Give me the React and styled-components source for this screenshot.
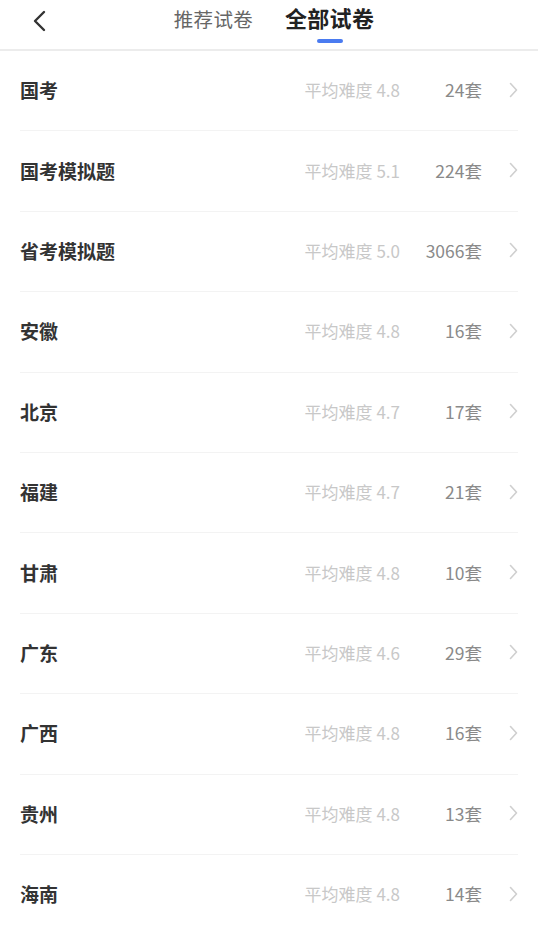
import styled, { createGlobalStyle } from 'styled-components';

const GlobalStyle = createGlobalStyle`
    html, body {
        margin: 0;
        padding: 0;
        background: #fff;
    }

    body {
        font-family: "Noto Sans CJK SC", "Noto Sans", sans-serif;
        -webkit-font-smoothing: antialiased;
    }
`;

const Page = styled.div`
    width: 538px;
    height: 934px;
    overflow: hidden;
`;

const Header = styled.header`
    position: relative;
    height: 49px;
    display: flex;
    align-items: center;
    justify-content: center;
    border-bottom: 2px solid #ececec;
`;

const BackBtn = styled.button`
    position: absolute;
    left: 26px;
    top: 8px;
    width: 26px;
    height: 26px;
    padding: 0;
    border: none;
    background: none;
    display: flex;
    align-items: center;
    justify-content: center;
`;

const Tabs = styled.nav`
    display: flex;
    align-items: flex-start;
    gap: 32px;
    margin-left: 10px;
    height: 100%;
`;

const Tab = styled.div`
    position: relative;
    padding-top: ${({ $active }) => ($active ? '2px' : '4px')};
    font-size: ${({ $active }) => ($active ? '22px' : '19.5px')};
    font-weight: ${({ $active }) => ($active ? 700 : 400)};
    color: ${({ $active }) => ($active ? '#222' : '#666')};
    line-height: 30px;
    letter-spacing: 0.3px;

    &::after {
        content: '';
        display: ${({ $active }) => ($active ? 'block' : 'none')};
        position: absolute;
        left: 50%;
        top: 39px;
        width: 26px;
        height: 4px;
        margin-left: -13px;
        border-radius: 2px;
        background: #4a7bf0;
    }
`;

const List = styled.ul`
    list-style: none;
    margin: 0;
    padding: 0;
`;

const Row = styled.li`
    height: 80.4px;
    box-sizing: border-box;
    margin: 0 20px;
    display: flex;
    align-items: center;
    border-bottom: 1px solid #f3f3f3;
    padding-bottom: 2px;
`;

const Name = styled.span`
    flex: 1;
    font-size: 19px;
    font-weight: 700;
    color: #333;
`;

const Difficulty = styled.span`
    font-size: 17px;
    color: #c8c8c8;
`;

const Count = styled.span`
    width: 82px;
    text-align: right;
    font-size: 17.5px;
    color: #8a8a8a;
`;

const Arrow = styled.span`
    width: 36px;
    display: flex;
    justify-content: flex-end;
`;

const rows = [
    ['国考', '4.8', 24],
    ['国考模拟题', '5.1', 224],
    ['省考模拟题', '5.0', 3066],
    ['安徽', '4.8', 16],
    ['北京', '4.7', 17],
    ['福建', '4.7', 21],
    ['甘肃', '4.8', 10],
    ['广东', '4.6', 29],
    ['广西', '4.8', 16],
    ['贵州', '4.8', 13],
    ['海南', '4.8', 14],
];

function App() {
    return (
        <Page>
            <GlobalStyle />
            <Header>
                <BackBtn aria-label="返回">
                    <svg width="16" height="22" viewBox="0 0 16 22" fill="none">
                        <path d="M13 2 L4 11 L13 20" stroke="#333" strokeWidth="2.4" strokeLinecap="round" strokeLinejoin="round" />
                    </svg>
                </BackBtn>
                <Tabs>
                    <Tab>推荐试卷</Tab>
                    <Tab $active>全部试卷</Tab>
                </Tabs>
            </Header>
            <List>
                {rows.map(([name, level, count]) => (
                    <Row key={name}>
                        <Name>{name}</Name>
                        <Difficulty>平均难度 {level}</Difficulty>
                        <Count>{count}套</Count>
                        <Arrow>
                            <svg width="9" height="16" viewBox="0 0 9 16" fill="none">
                                <path d="M1.5 1.5 L7.5 8 L1.5 14.5" stroke="#cfcfcf" strokeWidth="1.6" strokeLinecap="round" strokeLinejoin="round" />
                            </svg>
                        </Arrow>
                    </Row>
                ))}
            </List>
        </Page>
    );
}

export default App;
